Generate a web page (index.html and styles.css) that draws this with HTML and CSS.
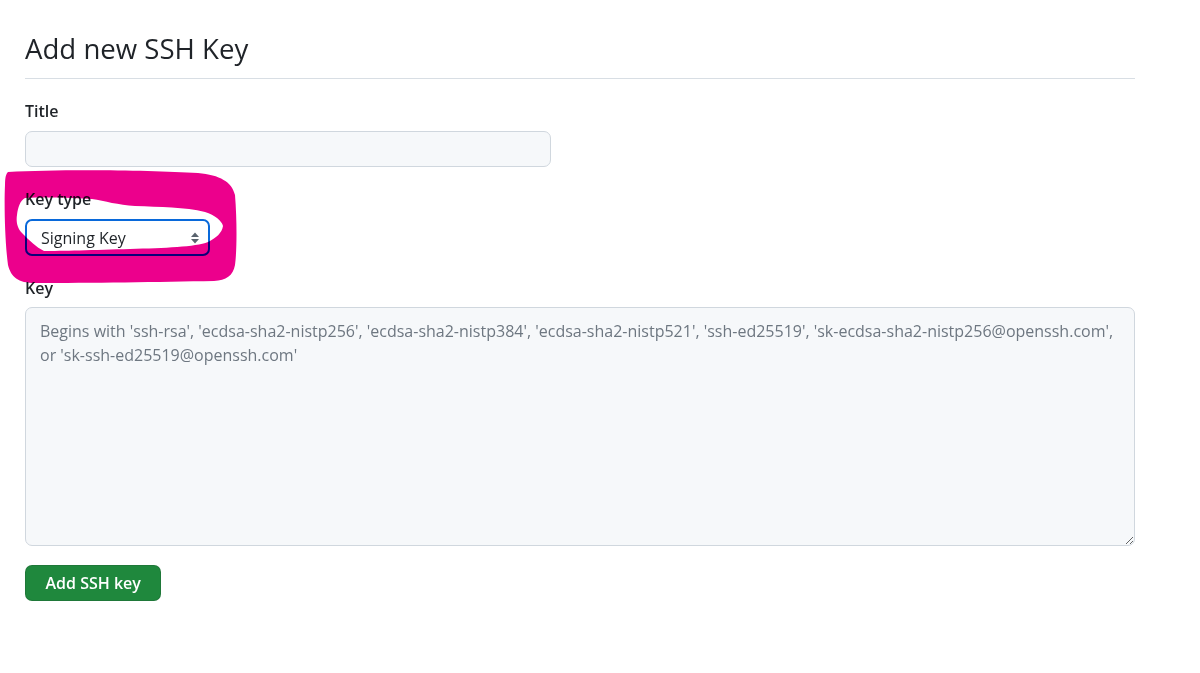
FILE: index.html
```html
<!DOCTYPE html>
<html lang="en">
<head>
<meta charset="utf-8">
<title>Add new SSH Key</title>
<link rel="stylesheet" href="styles.css">
</head>
<body>
<main class="page">
  <div class="subhead">
    <h1 class="subhead-heading">Add new SSH Key</h1>
  </div>
  <form class="form">
    <div class="field">
      <label class="label" for="title">Title</label>
      <input class="input input-title" id="title" type="text">
    </div>
    <div class="field">
      <label class="label">Key type</label>
      <div class="select">
        <span class="select-value">Signing Key</span>
        <svg class="select-arrows" width="10" height="14" viewBox="0 0 10 14" aria-hidden="true">
          <path d="M5 1.5 L9 6 H1 Z" fill="#59636e"/>
          <path d="M5 12.5 L9 8 H1 Z" fill="#59636e"/>
        </svg>
      </div>
    </div>
    <div class="field field-key">
      <label class="label" for="key">Key</label>
      <textarea class="input textarea" id="key" placeholder="Begins with 'ssh-rsa', 'ecdsa-sha2-nistp256', 'ecdsa-sha2-nistp384', 'ecdsa-sha2-nistp521', 'ssh-ed25519', 'sk-ecdsa-sha2-nistp256@openssh.com', or 'sk-ssh-ed25519@openssh.com'"></textarea>
    </div>
    <div class="actions">
      <button type="button" class="btn-primary">Add SSH key</button>
    </div>
  </form>
  <svg class="scribble" width="240" height="122" viewBox="0 0 240 122" aria-hidden="true">
    <path fill-rule="evenodd" fill="#ec008c" d="
      M8 7 C60 4 150 5 198 8 C220 10 232 17 235 30 C237 55 237 85 235 100 C233 111 226 115 214 116 C160 117 90 118 35 118 C18 118 11 112 8 100 C5 78 4 40 5 20 C5 12 6 9 8 7 Z
      M25 33 C50 32 75 33 92 34 C105 36 118 40 135 41 C160 42 185 42 205 47 C215 50 222 56 223 61 C222 68 216 73 208 77 C195 82 165 83 130 84 C95 85 60 86 44 86 C36 82 30 76 22 68 C17 63 16 56 17 50 C18 42 20 36 25 33 Z"/>
  </svg>
</main>
</body>
</html>
```
FILE: styles.css
```css
* { box-sizing: border-box; }
html, body { margin: 0; padding: 0; background: #ffffff; }
body {
  font-family: "Open Sans", "Noto Sans", "Liberation Sans", sans-serif;
  color: #1f2328;
}
.page {
  position: relative;
  width: 1110px;
  margin-left: 25px;
  padding-top: 30px;
}
.subhead {
  border-bottom: 1px solid #d8dee4;
  padding-bottom: 12px;
}
.subhead-heading {
  margin: 0;
  font-size: 27.6px;
  font-weight: 400;
  line-height: 36px;
}
.form {
  display: flex;
  flex-direction: column;
  gap: 20px;
  padding-top: 20px;
}
.field {
  display: flex;
  flex-direction: column;
  align-items: flex-start;
  gap: 8px;
}
.field-key { gap: 7px; }
.label {
  font-size: 16px;
  font-weight: 600;
  line-height: 24px;
}
.input {
  font-family: inherit;
  font-size: 16px;
  color: #1f2328;
  background: #f6f8fa;
  border: 1px solid #d0d7de;
  border-radius: 7px;
  outline: none;
}
.input-title {
  width: 526px;
  height: 36px;
  padding: 0 14px;
}
.select {
  width: 185px;
  height: 37px;
  display: flex;
  align-items: center;
  justify-content: space-between;
  padding: 0 8px 0 14px;
  background: #ffffff;
  border: 2px solid #0969da;
  border-radius: 7px;
  font-size: 16px;
}
.select-value { line-height: 24px; }
.select-arrows { display: block; }
.textarea {
  width: 1110px;
  height: 239px;
  padding: 11px 14px;
  line-height: 24px;
  resize: vertical;
}
.textarea::placeholder { color: #6e7781; opacity: 1; }
.actions { margin-top: -1px; }
.btn-primary {
  font-family: inherit;
  font-size: 16px;
  font-weight: 600;
  color: #ffffff;
  background: #1f883d;
  border: 1px solid rgba(31, 35, 40, 0.15);
  border-radius: 7px;
  height: 36px;
  padding: 0 19.5px;
  line-height: 24px;
  cursor: pointer;
}
.scribble {
  position: absolute;
  left: -25px;
  top: 165px;
  mix-blend-mode: multiply;
  pointer-events: none;
}
```
